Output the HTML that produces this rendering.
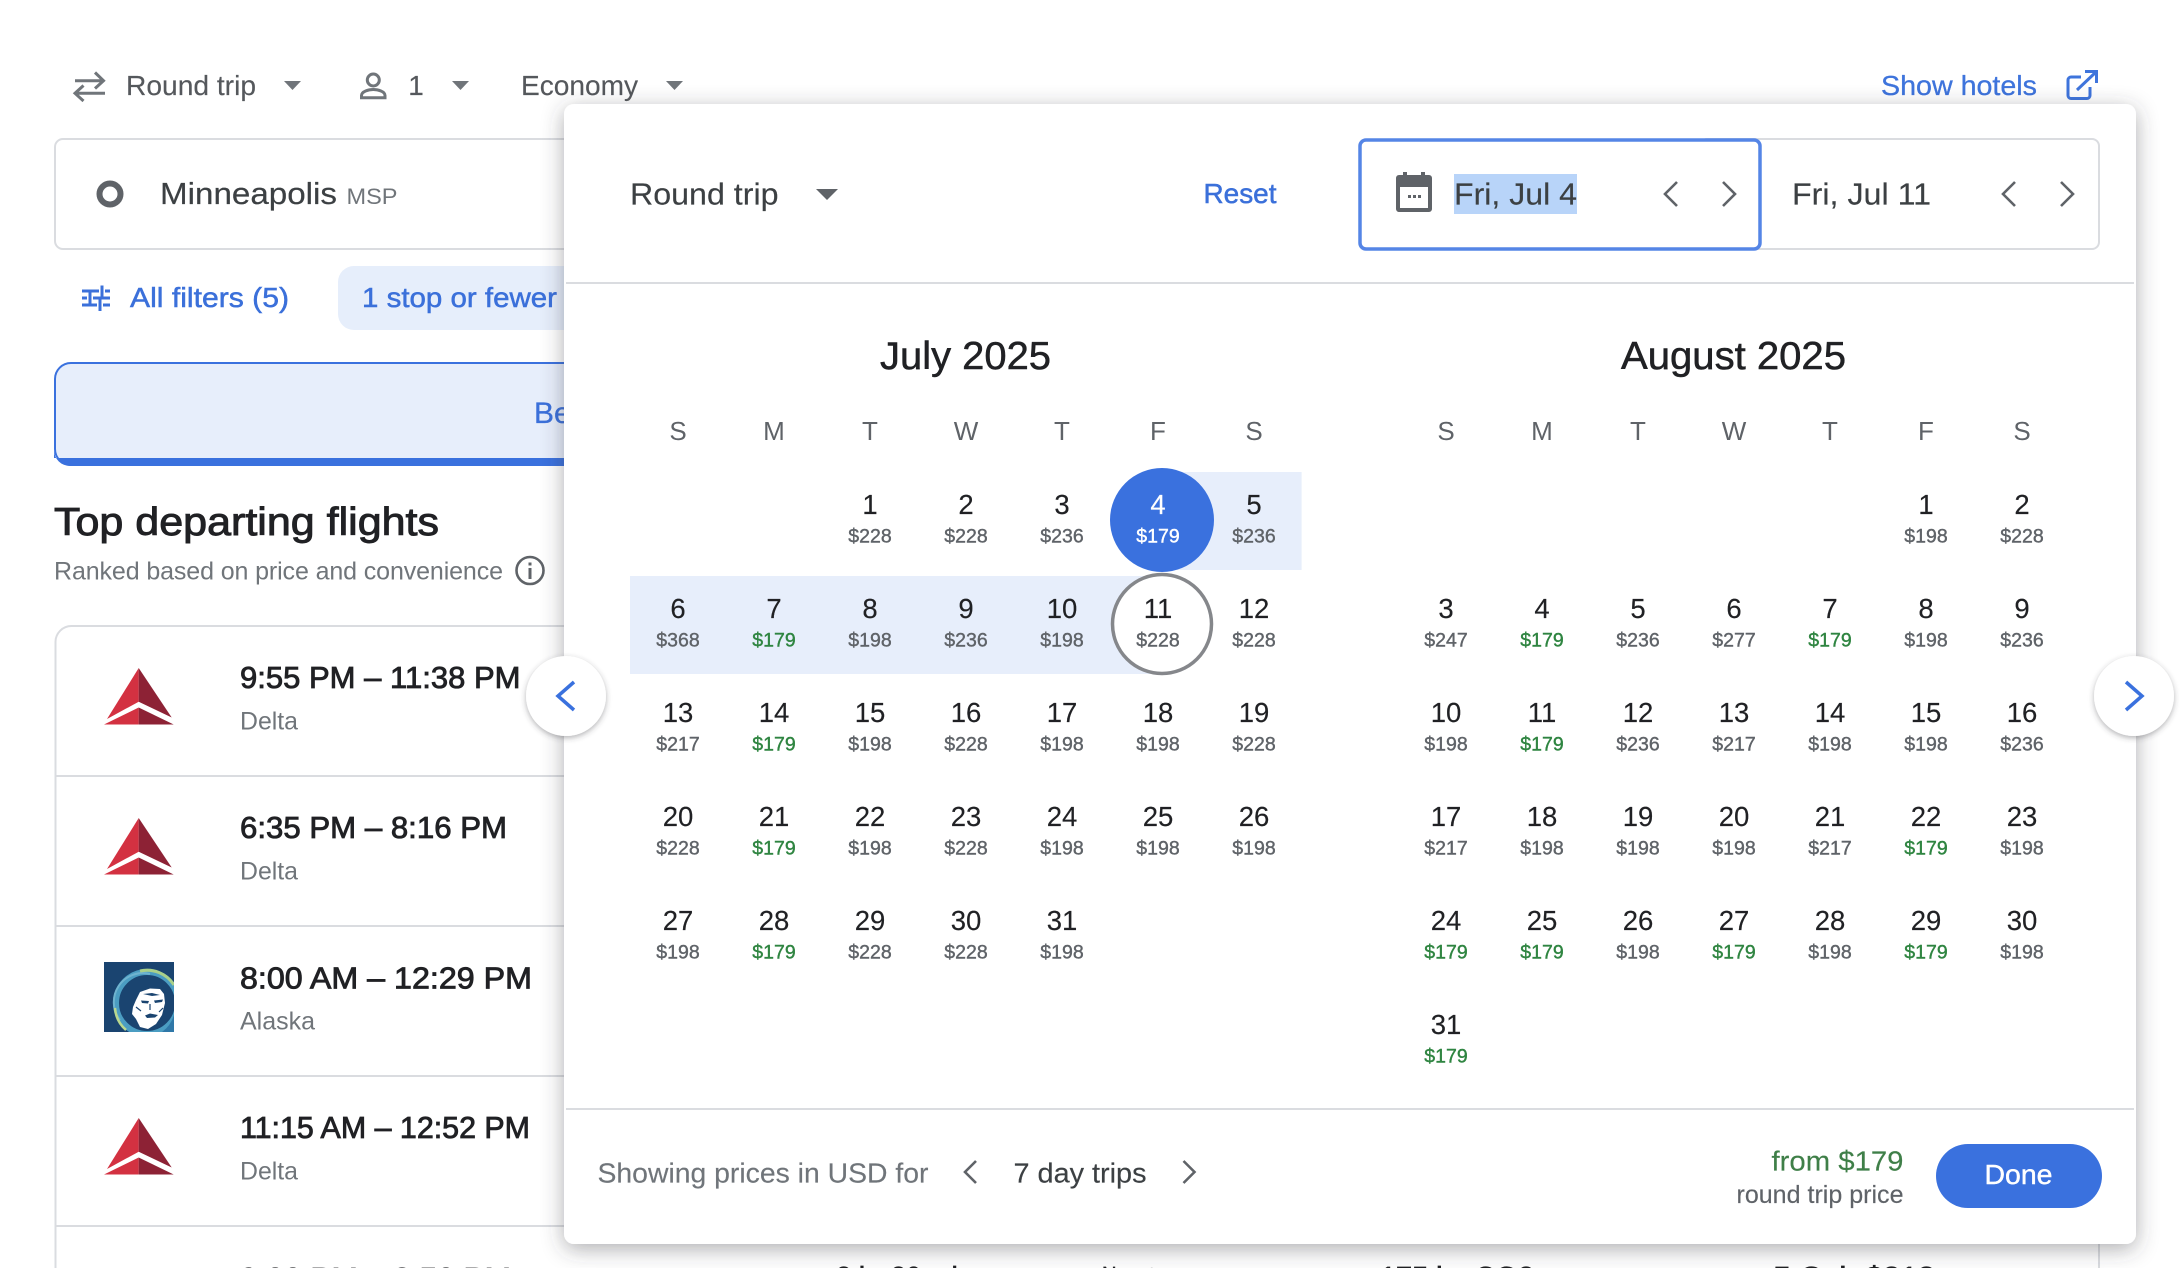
<!DOCTYPE html>
<html><head><meta charset="utf-8"><title>Flights</title>
<style>
html,body{margin:0;padding:0;background:#fff;width:2180px;height:1268px;overflow:hidden}
svg{display:block;font-family:"Liberation Sans",Arial,sans-serif}
.n{font-size:27.5px;fill:#202124;text-anchor:middle;stroke:#202124;stroke-width:.15}
.p{font-size:19.5px;fill:#5f6368;text-anchor:middle;stroke:#5f6368;stroke-width:.4}
.g{fill:#2f8541;stroke:#2f8541}
.w{fill:#fff;stroke:#fff}
.d{font-size:26px;fill:#5f6368;text-anchor:middle}
.t{font-size:31px;fill:#202124;stroke:#202124;stroke-width:.85}
.a{font-size:25px;fill:#70757a}
.c{font-size:28px;fill:#55585c;stroke:#55585c;stroke-width:.15}
.b{font-size:28px;fill:#3b70da;stroke:#3b70da;stroke-width:.5}
.chev{fill:none;stroke:#5f6368;stroke-width:2.6}
.m{font-size:39px;fill:#202124;stroke:#202124;stroke-width:.5}
</style></head><body>
<svg width="2180" height="1268" viewBox="0 0 2180 1268" xmlns="http://www.w3.org/2000/svg">
<defs>
<filter id="sh" x="-5%" y="-5%" width="110%" height="112%"><feDropShadow dx="0" dy="5" stdDeviation="11" flood-color="#3c4043" flood-opacity=".42"/></filter>
<filter id="sb" x="-30%" y="-30%" width="160%" height="160%"><feDropShadow dx="0" dy="2" stdDeviation="3" flood-color="#3c4043" flood-opacity=".4"/></filter>
<g id="delta">
<path d="M138.700 668L107 719L138.700 701.700Z" fill="#d33141"/>
<path d="M138.700 668L171.700 717.500L138.700 701.700Z" fill="#8d2235"/>
<path d="M104 724.500L138.700 707.500V724.500Z" fill="#d33141"/>
<path d="M173.700 724.500L138.700 707.500V724.500Z" fill="#8d2235"/>
</g>
<clipPath id="ak"><rect x="104" y="962" width="70" height="70"/></clipPath>
</defs>

<!-- top row -->
<path d="M75 80.700H104M95 72.500L103.500 80.700L95 88.500M105 93.300H76M83.500 85.500L75 93.300L83.500 101" fill="none" stroke="#70757a" stroke-width="3"/>
<text class="c" x="126" y="95" textLength="130" lengthAdjust="spacingAndGlyphs">Round trip</text>
<polygon points="284,81 301,81 292.500,90" fill="#70757a"/>
<circle cx="373.300" cy="80" r="6" fill="none" stroke="#70757a" stroke-width="3"/>
<path d="M361.500 97.700V95.500C361.500 91.500 368.500 89.500 373.300 89.500S385 91.500 385 95.500V97.700Z" fill="none" stroke="#70757a" stroke-width="3"/>
<text class="c" x="416" y="95" text-anchor="middle">1</text>
<polygon points="452,81 469,81 460.500,90" fill="#70757a"/>
<text class="c" x="521" y="95" textLength="117" lengthAdjust="spacingAndGlyphs">Economy</text>
<polygon points="666,81 683,81 674.500,90" fill="#70757a"/>
<text class="c" x="1881" y="95" textLength="156" lengthAdjust="spacingAndGlyphs" style="fill:#3e74dc;stroke:#3e74dc;stroke-width:.3">Show hotels</text>
<path d="M2081 77H2071a3 3 0 0 0-3 3V95.500a3 3 0 0 0 3 3H2087a3 3 0 0 0 3-3V87M2077 90L2096 72M2085 71.500H2096.500V83" fill="none" stroke="#3e74dc" stroke-width="3"/>

<!-- search box -->
<rect x="55" y="139" width="800" height="110" rx="8" fill="#fff" stroke="#dadce0" stroke-width="2"/>
<circle cx="110" cy="194" r="10.500" fill="none" stroke="#5f6368" stroke-width="6"/>
<text x="160" y="204" font-size="31" fill="#3c4043" stroke="#3c4043" stroke-width=".2" textLength="177" lengthAdjust="spacingAndGlyphs">Minneapolis</text>
<text x="346.500" y="204" font-size="22" fill="#70757a" textLength="51" lengthAdjust="spacingAndGlyphs">MSP</text>

<!-- filters -->
<path d="M82 291H99M105 291H110M102 285.500V296.500M82 298H87M93 298H110M90 292.500V303.500M82 305H97M103 305H110M100 299.500V311" fill="none" stroke="#3b70da" stroke-width="3"/>
<text class="b" x="130" y="307" textLength="159" lengthAdjust="spacingAndGlyphs">All filters (5)</text>
<rect x="338" y="266" width="400" height="64" rx="16" fill="#e6eefb"/>
<text class="b" x="362" y="307" textLength="195" lengthAdjust="spacingAndGlyphs">1 stop or fewer</text>

<!-- tab -->
<rect x="55" y="363" width="800" height="102" rx="16" fill="#e7eefb" stroke="#3a71de" stroke-width="2"/>
<path d="M54 456V458H856V466H70A16 16 0 0 1 54 450Z" fill="#3a71de"/>
<text x="534" y="423" font-size="30" fill="#3b70da" stroke="#3b70da" stroke-width=".3">Best</text>

<!-- heading -->
<text x="54" y="535" font-size="39" fill="#202124" stroke="#202124" stroke-width=".9" textLength="385" lengthAdjust="spacingAndGlyphs">Top departing flights</text>
<text class="a" x="54" y="579.500" textLength="449">Ranked based on price and convenience</text>
<circle cx="530" cy="570.500" r="13.500" fill="none" stroke="#5f6368" stroke-width="2.600"/>
<rect x="528.500" y="568" width="3" height="11" fill="#5f6368"/><rect x="528.500" y="562.500" width="3" height="3" fill="#5f6368"/>

<!-- list -->
<rect x="55.500" y="626" width="2043.500" height="700" rx="16" fill="#fff" stroke="#dadce0" stroke-width="2"/>
<path d="M56 776H2099M56 926H2099M56 1076H2099M56 1226H2099" stroke="#dadce0" stroke-width="2"/>
<use href="#delta"/>
<use href="#delta" transform="translate(0,150)"/>
<use href="#delta" transform="translate(0,450)"/>
<rect x="104" y="962" width="70" height="70" fill="#1a4470"/>
<g clip-path="url(#ak)">
<circle cx="147" cy="1003" r="31" fill="none" stroke="#4b9dc2" stroke-width="6"/>
<path d="M120 1020A29 29 0 0 1 150 974" fill="none" stroke="#6fb3cf" stroke-width="2"/>
<path d="M140 971A32 32 0 0 1 174 985" fill="none" stroke="#a9d08a" stroke-width="3"/>
<path d="M115 1008A32 32 0 0 0 126 1030" fill="none" stroke="#b9d88e" stroke-width="2.500"/>
<path d="M174 1015A32 32 0 0 1 162 1032H174Z" fill="#2f78a8"/>
<path d="M140 992L150 988.500L160 989L164 994L165 1003L162 1015L156 1024L148 1029L140 1027L136 1019L132 1014L133 1007L136 1000Z" fill="#fff"/>
<path d="M141 1000.500L149 1001L148 1003.500L142 1003ZM154 1000.500L163 999.500L162 1002L155 1003Z" fill="#1a4470"/>
<path d="M143 994L152 993L160 995L152 996Z" fill="#1a4470"/>
<path d="M136 1007L141 1011M163 1008L159 1012M150 1004V1010" fill="none" stroke="#1a4470" stroke-width="1.200"/>
<path d="M145 1015.500L150 1013.500L158 1015L155 1017.500L147 1018Z" fill="#1a4470"/>
</g>
<text class="t" x="240" y="688" textLength="280.500" lengthAdjust="spacingAndGlyphs">9:55 PM – 11:38 PM</text>
<text class="a" x="240" y="729.700" textLength="58" lengthAdjust="spacingAndGlyphs">Delta</text>
<text class="t" x="240" y="838" textLength="267" lengthAdjust="spacingAndGlyphs">6:35 PM – 8:16 PM</text>
<text class="a" x="240" y="879.500" textLength="58" lengthAdjust="spacingAndGlyphs">Delta</text>
<text class="t" x="240" y="988.500" textLength="292" lengthAdjust="spacingAndGlyphs">8:00 AM – 12:29 PM</text>
<text class="a" x="240" y="1029.700" textLength="75" lengthAdjust="spacingAndGlyphs">Alaska</text>
<text class="t" x="240" y="1138" textLength="290" lengthAdjust="spacingAndGlyphs">11:15 AM – 12:52 PM</text>
<text class="a" x="240" y="1179.500" textLength="58" lengthAdjust="spacingAndGlyphs">Delta</text>
<text class="t" x="240" y="1289" textLength="271" lengthAdjust="spacingAndGlyphs">9:00 PM – 2:50 PM</text>
<text class="t" x="836" y="1288" textLength="137" lengthAdjust="spacingAndGlyphs">2 hr 20 min</text>
<text class="t" x="1102" y="1288" textLength="75" lengthAdjust="spacingAndGlyphs">Nonstop</text>
<text class="t" x="1380" y="1288" textLength="154" lengthAdjust="spacingAndGlyphs">175 kg CO2</text>
<text class="t" x="1755" y="1288" textLength="180" lengthAdjust="spacingAndGlyphs">+5 Cab $212</text>

<!-- panel -->
<rect x="564" y="104" width="1572" height="1140" rx="10" fill="#fff" filter="url(#sh)"/>
<path d="M566 283H2134M566 1109H2134" stroke="#dadce0" stroke-width="2"/>

<text x="630" y="204.500" font-size="31" fill="#3c4043" stroke="#3c4043" stroke-width=".15" textLength="148.500" lengthAdjust="spacingAndGlyphs">Round trip</text>
<polygon points="816,189 838,189 827,200" fill="#5f6368"/>
<text class="b" x="1203.500" y="203" textLength="73" lengthAdjust="spacingAndGlyphs">Reset</text>

<rect x="1700" y="139" width="399" height="110" rx="7" fill="#fff" stroke="#dadce0" stroke-width="2"/>
<rect x="1360" y="140" width="400" height="109" rx="6" fill="#fff" stroke="#5585e6" stroke-width="3.500"/>
<path d="M1399 175H1403V172H1407V175H1421V172H1425V175H1429A3 3 0 0 1 1432 178V209A3 3 0 0 1 1429 212H1399A3 3 0 0 1 1396 209V178A3 3 0 0 1 1399 175ZM1400 187V208H1428V187Z" fill="#5f6368" fill-rule="evenodd"/>
<path d="M1408 195h3v3h-3zM1413 195h3v3h-3zM1418 195h3v3h-3z" fill="#5f6368"/>
<rect x="1454" y="174" width="123" height="40" fill="#b8d4f9"/>
<text x="1454" y="204.500" font-size="31" fill="#3c4043" stroke="#3c4043" stroke-width=".15" textLength="123" lengthAdjust="spacingAndGlyphs">Fri, Jul 4</text>
<text x="1792" y="204.500" font-size="31" fill="#3c4043" stroke="#3c4043" stroke-width=".15" textLength="139" lengthAdjust="spacingAndGlyphs">Fri, Jul 11</text>
<path class="chev" d="M1677 182L1665 194L1677 206M1723 182L1735 194L1723 206M2015 182L2003 194L2015 206M2061 182L2073 194L2061 206"/>

<!-- months -->
<text class="m" x="880" y="369" textLength="171" lengthAdjust="spacingAndGlyphs">July 2025</text>
<text class="m" x="1621" y="369" textLength="225" lengthAdjust="spacingAndGlyphs">August 2025</text>

<!-- range -->
<rect x="1158" y="472" width="143.600" height="98" fill="#e7eefb"/>
<rect x="630" y="576" width="528" height="98" fill="#e7eefb"/>
<circle cx="1162" cy="520" r="52" fill="#3a71de"/>
<circle cx="1162" cy="624" r="49.500" fill="#fff" stroke="#85878b" stroke-width="3.500"/>

<g transform="translate(0,-1)">
<text class="d" x="678" y="441">S</text><text class="d" x="774" y="441">M</text><text class="d" x="870" y="441">T</text><text class="d" x="966" y="441">W</text><text class="d" x="1062" y="441">T</text><text class="d" x="1158" y="441">F</text><text class="d" x="1254" y="441">S</text>
<text class="d" x="1446" y="441">S</text><text class="d" x="1542" y="441">M</text><text class="d" x="1638" y="441">T</text><text class="d" x="1734" y="441">W</text><text class="d" x="1830" y="441">T</text><text class="d" x="1926" y="441">F</text><text class="d" x="2022" y="441">S</text>

<!-- July -->
<text class="n" x="870" y="515">1</text><text class="p" x="870" y="543.500">$228</text>
<text class="n" x="966" y="515">2</text><text class="p" x="966" y="543.500">$228</text>
<text class="n" x="1062" y="515">3</text><text class="p" x="1062" y="543.500">$236</text>
<text class="n" x="1158" y="515" style="fill:#fff;stroke:#fff">4</text><text class="p w" x="1158" y="543.500">$179</text>
<text class="n" x="1254" y="515">5</text><text class="p" x="1254" y="543.500">$236</text>

<text class="n" x="678" y="619">6</text><text class="p" x="678" y="647.500">$368</text>
<text class="n" x="774" y="619">7</text><text class="p g" x="774" y="647.500">$179</text>
<text class="n" x="870" y="619">8</text><text class="p" x="870" y="647.500">$198</text>
<text class="n" x="966" y="619">9</text><text class="p" x="966" y="647.500">$236</text>
<text class="n" x="1062" y="619">10</text><text class="p" x="1062" y="647.500">$198</text>
<text class="n" x="1158" y="619">11</text><text class="p" x="1158" y="647.500">$228</text>
<text class="n" x="1254" y="619">12</text><text class="p" x="1254" y="647.500">$228</text>

<text class="n" x="678" y="723">13</text><text class="p" x="678" y="751.500">$217</text>
<text class="n" x="774" y="723">14</text><text class="p g" x="774" y="751.500">$179</text>
<text class="n" x="870" y="723">15</text><text class="p" x="870" y="751.500">$198</text>
<text class="n" x="966" y="723">16</text><text class="p" x="966" y="751.500">$228</text>
<text class="n" x="1062" y="723">17</text><text class="p" x="1062" y="751.500">$198</text>
<text class="n" x="1158" y="723">18</text><text class="p" x="1158" y="751.500">$198</text>
<text class="n" x="1254" y="723">19</text><text class="p" x="1254" y="751.500">$228</text>

<text class="n" x="678" y="827">20</text><text class="p" x="678" y="855.500">$228</text>
<text class="n" x="774" y="827">21</text><text class="p g" x="774" y="855.500">$179</text>
<text class="n" x="870" y="827">22</text><text class="p" x="870" y="855.500">$198</text>
<text class="n" x="966" y="827">23</text><text class="p" x="966" y="855.500">$228</text>
<text class="n" x="1062" y="827">24</text><text class="p" x="1062" y="855.500">$198</text>
<text class="n" x="1158" y="827">25</text><text class="p" x="1158" y="855.500">$198</text>
<text class="n" x="1254" y="827">26</text><text class="p" x="1254" y="855.500">$198</text>

<text class="n" x="678" y="931">27</text><text class="p" x="678" y="959.500">$198</text>
<text class="n" x="774" y="931">28</text><text class="p g" x="774" y="959.500">$179</text>
<text class="n" x="870" y="931">29</text><text class="p" x="870" y="959.500">$228</text>
<text class="n" x="966" y="931">30</text><text class="p" x="966" y="959.500">$228</text>
<text class="n" x="1062" y="931">31</text><text class="p" x="1062" y="959.500">$198</text>

<!-- August -->
<text class="n" x="1926" y="515">1</text><text class="p" x="1926" y="543.500">$198</text>
<text class="n" x="2022" y="515">2</text><text class="p" x="2022" y="543.500">$228</text>

<text class="n" x="1446" y="619">3</text><text class="p" x="1446" y="647.500">$247</text>
<text class="n" x="1542" y="619">4</text><text class="p g" x="1542" y="647.500">$179</text>
<text class="n" x="1638" y="619">5</text><text class="p" x="1638" y="647.500">$236</text>
<text class="n" x="1734" y="619">6</text><text class="p" x="1734" y="647.500">$277</text>
<text class="n" x="1830" y="619">7</text><text class="p g" x="1830" y="647.500">$179</text>
<text class="n" x="1926" y="619">8</text><text class="p" x="1926" y="647.500">$198</text>
<text class="n" x="2022" y="619">9</text><text class="p" x="2022" y="647.500">$236</text>

<text class="n" x="1446" y="723">10</text><text class="p" x="1446" y="751.500">$198</text>
<text class="n" x="1542" y="723">11</text><text class="p g" x="1542" y="751.500">$179</text>
<text class="n" x="1638" y="723">12</text><text class="p" x="1638" y="751.500">$236</text>
<text class="n" x="1734" y="723">13</text><text class="p" x="1734" y="751.500">$217</text>
<text class="n" x="1830" y="723">14</text><text class="p" x="1830" y="751.500">$198</text>
<text class="n" x="1926" y="723">15</text><text class="p" x="1926" y="751.500">$198</text>
<text class="n" x="2022" y="723">16</text><text class="p" x="2022" y="751.500">$236</text>

<text class="n" x="1446" y="827">17</text><text class="p" x="1446" y="855.500">$217</text>
<text class="n" x="1542" y="827">18</text><text class="p" x="1542" y="855.500">$198</text>
<text class="n" x="1638" y="827">19</text><text class="p" x="1638" y="855.500">$198</text>
<text class="n" x="1734" y="827">20</text><text class="p" x="1734" y="855.500">$198</text>
<text class="n" x="1830" y="827">21</text><text class="p" x="1830" y="855.500">$217</text>
<text class="n" x="1926" y="827">22</text><text class="p g" x="1926" y="855.500">$179</text>
<text class="n" x="2022" y="827">23</text><text class="p" x="2022" y="855.500">$198</text>

<text class="n" x="1446" y="931">24</text><text class="p g" x="1446" y="959.500">$179</text>
<text class="n" x="1542" y="931">25</text><text class="p g" x="1542" y="959.500">$179</text>
<text class="n" x="1638" y="931">26</text><text class="p" x="1638" y="959.500">$198</text>
<text class="n" x="1734" y="931">27</text><text class="p g" x="1734" y="959.500">$179</text>
<text class="n" x="1830" y="931">28</text><text class="p" x="1830" y="959.500">$198</text>
<text class="n" x="1926" y="931">29</text><text class="p g" x="1926" y="959.500">$179</text>
<text class="n" x="2022" y="931">30</text><text class="p" x="2022" y="959.500">$198</text>

<text class="n" x="1446" y="1035">31</text><text class="p g" x="1446" y="1063.500">$179</text>
</g>

<!-- footer -->
<text x="597.500" y="1182.500" font-size="28" fill="#70757a" stroke="#70757a" stroke-width=".15" textLength="331" lengthAdjust="spacingAndGlyphs">Showing prices in USD for</text>
<path class="chev" d="M976 1161L965 1172L976 1183M1183.500 1161L1194.500 1172L1183.500 1183"/>
<text x="1013.500" y="1182.500" font-size="28" fill="#3c4043" stroke="#3c4043" stroke-width=".15" textLength="133" lengthAdjust="spacingAndGlyphs">7 day trips</text>
<text x="1771.500" y="1170.500" font-size="28" fill="#3f7f48" stroke="#3f7f48" stroke-width=".15" textLength="132" lengthAdjust="spacingAndGlyphs">from $179</text>
<text x="1736.500" y="1203" font-size="25" fill="#5f6368" stroke="#5f6368" stroke-width=".15" textLength="167" lengthAdjust="spacingAndGlyphs">round trip price</text>
<rect x="1936" y="1144" width="166" height="64" rx="32" fill="#3a71de"/>
<text x="1984.500" y="1184" font-size="28" fill="#fff" stroke="#fff" stroke-width=".4" textLength="68" lengthAdjust="spacingAndGlyphs">Done</text>

<!-- nav buttons -->
<circle cx="566" cy="696" r="40" fill="#fff" filter="url(#sb)"/>
<path d="M574 682L558 696L574 710" fill="none" stroke="#3a71de" stroke-width="3.500"/>
<circle cx="2134" cy="696" r="40" fill="#fff" filter="url(#sb)"/>
<path d="M2126 682L2142 696L2126 710" fill="none" stroke="#3a71de" stroke-width="3.500"/>
</svg>
</body></html>
